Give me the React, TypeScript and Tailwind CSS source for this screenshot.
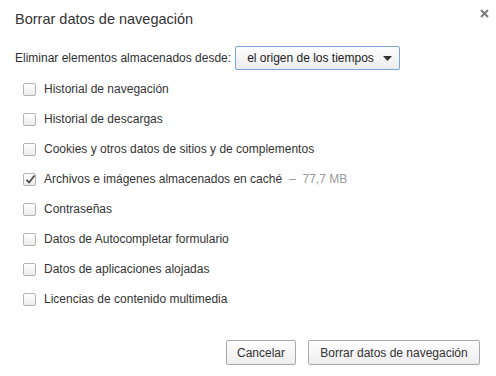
import { useState } from 'react'

const items = [
  { label: 'Historial de navegación', checked: false },
  { label: 'Historial de descargas', checked: false },
  { label: 'Cookies y otros datos de sitios y de complementos', checked: false },
  { label: 'Archivos e imágenes almacenados en caché', checked: true, extra: '77,7 MB' },
  { label: 'Contraseñas', checked: false },
  { label: 'Datos de Autocompletar formulario', checked: false },
  { label: 'Datos de aplicaciones alojadas', checked: false },
  { label: 'Licencias de contenido multimedia', checked: false },
]

function Checkbox({ checked, onClick }: { checked: boolean; onClick: () => void }) {
  return (
    <span
      onClick={onClick}
      className="relative flex h-[13px] w-[13px] shrink-0 items-center justify-center rounded-[2px] border border-[#b4b4b4] bg-gradient-to-b from-[#ffffff] to-[#ececec] shadow-[inset_0_1px_0_#fff]"
    >
      {checked && (
        <svg width="11" height="11" viewBox="0 0 11 11" className="absolute left-[1px] top-[0px]">
          <path d="M1.5 5.8 L4.2 8.5 L9.5 1.5" fill="none" stroke="#4a4a4a" strokeWidth="1.8" />
        </svg>
      )}
    </span>
  )
}

export default function App() {
  const [checks, setChecks] = useState(items.map((i) => i.checked))

  const toggle = (index: number) => {
    setChecks((prev) => prev.map((c, i) => (i === index ? !c : c)))
  }

  return (
    <div className="relative h-[376px] w-[496px] bg-white font-['Liberation_Sans',Arial,sans-serif] text-[#333333]">
      {/* Close */}
      <button className="absolute left-[479px] top-[8px] flex h-[10px] w-[10px] items-center justify-center">
        <svg width="9" height="9" viewBox="0 0 9 9">
          <path d="M1 1 L8 8 M8 1 L1 8" stroke="#7b7b7b" strokeWidth="2" />
        </svg>
      </button>

      {/* Title */}
      <div className="pl-[15px] pt-[10px] text-[14.5px] leading-[18px] text-[#333333]">
        Borrar datos de navegación
      </div>

      {/* Time range */}
      <div className="mt-[18px] flex items-center whitespace-nowrap pl-[15px] text-[12px]">
        <span className="text-[#303030]">Eliminar elementos almacenados desde:</span>
        <div className="ml-[4px] flex h-[24px] w-[165px] shrink-0 items-center justify-between rounded-[2px] border border-[#7aa4e0] bg-gradient-to-b from-[#fefefe] to-[#ececec] pl-[11px] pr-[7px] text-[#222222]">
          <span>el origen de los tiempos</span>
          <svg width="9" height="5" viewBox="0 0 9 5">
            <path d="M0 0 L9 0 L4.5 5 Z" fill="#333333" />
          </svg>
        </div>
      </div>

      {/* Options */}
      <div className="mt-[4px] flex flex-col">
        {items.map((item, index) => (
          <div key={index} className="flex h-[30px] items-center gap-[8px] pl-[23px] text-[12px] text-[#333333]">
            <Checkbox checked={checks[index]} onClick={() => toggle(index)} />
            <span>
              {item.label}
              {item.extra && <span className="ml-[7px] text-[#999999]">–&nbsp; {item.extra}</span>}
            </span>
          </div>
        ))}
      </div>

      {/* Buttons */}
      <div className="mt-[26px] flex justify-end gap-[12px] pr-[16px]">
        <button className="h-[25px] w-[70px] rounded-[2px] border border-[#a9a9a9] bg-gradient-to-b from-[#fefefe] to-[#ededed] text-[12px] text-[#333333]">
          Cancelar
        </button>
        <button className="h-[25px] w-[172px] rounded-[2px] border border-[#a9a9a9] bg-gradient-to-b from-[#fefefe] to-[#ededed] text-[12px] text-[#333333]">
          Borrar datos de navegación
        </button>
      </div>
    </div>
  )
}
